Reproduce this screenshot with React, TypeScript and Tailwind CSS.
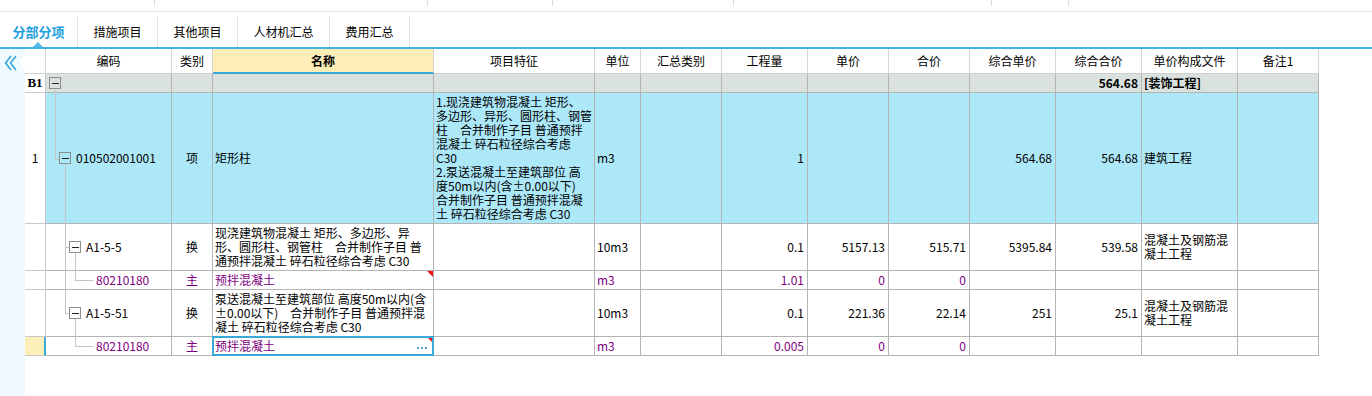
import React from 'react';
import clsx from 'clsx';

// column widths, border included
const W = {
  no: 'w-[21px]',
  code: 'w-[126px]',
  type: 'w-[41px]',
  name: 'w-[221px]',
  feat: 'w-[161px]',
  unit: 'w-[46px]',
  sum: 'w-[81px]',
  qty: 'w-[86px]',
  price: 'w-[81px]',
  total: 'w-[81px]',
  cprice: 'w-[86px]',
  ctotal: 'w-[86px]',
  file: 'w-[96px]',
  note: 'w-[81px]',
};

const HEADERS: [string, string][] = [
  [W.no, ''],
  [W.code, '编码'],
  [W.type, '类别'],
  [W.name, '名称'],
  [W.feat, '项目特征'],
  [W.unit, '单位'],
  [W.sum, '汇总类别'],
  [W.qty, '工程量'],
  [W.price, '单价'],
  [W.total, '合价'],
  [W.cprice, '综合单价'],
  [W.ctotal, '综合合价'],
  [W.file, '单价构成文件'],
  [W.note, '备注1'],
];

const TABS = [
  { label: '分部分项', w: 'w-[78px]', active: true },
  { label: '措施项目', w: 'w-[80px]' },
  { label: '其他项目', w: 'w-[80px]' },
  { label: '人材机汇总', w: 'w-[92px]' },
  { label: '费用汇总', w: 'w-[80px]' },
];

function Cell({ w, className, children }: { w: string; className?: string; children?: React.ReactNode }) {
  return (
    <div className={clsx('relative flex shrink-0 items-center border-r border-b border-[#b4b4b4]', w, className)}>
      {children}
    </div>
  );
}

function Lines({ lines }: { lines: string[] }) {
  return (
    <div className="flex flex-col leading-[14px]">
      {lines.map((l, i) => (
        <div key={i} className="whitespace-pre">
          {l}
        </div>
      ))}
    </div>
  );
}

function Toggle() {
  return (
    <div className="flex h-[12px] w-[12px] shrink-0 items-center justify-center border border-[#8e8e8e]">
      <div className="h-px w-[7px] bg-[#222]" />
    </div>
  );
}

// tree connector segment
function Seg({ className }: { className: string }) {
  return <div className={clsx('absolute bg-[#c4c4c4]', className)} />;
}

interface RowData {
  h: string;
  bg?: string;
  no?: string;
  code: React.ReactNode;
  type: string;
  name: React.ReactNode;
  feat?: string[];
  unit: string;
  qty: string;
  price?: string;
  total?: string;
  cprice?: string;
  ctotal?: string;
  file?: string[];
  purple?: boolean;
  flag?: boolean;
  selected?: boolean;
}

function DataRow({ r }: { r: RowData }) {
  const num = 'justify-end pr-[3px]';
  return (
    <div className={clsx('flex', r.h, r.purple ? 'text-[#800080]' : 'text-black')}>
      <Cell
        w={W.no}
        className={clsx(
          'justify-center border-[#c8c8c8] text-black',
          r.selected ? 'border-r-2 border-r-[#3aa8d8] bg-[#fdefb9]' : 'bg-white'
        )}
      >
        {r.no}
      </Cell>
      <Cell w={W.code} className={r.bg}>
        {r.code}
      </Cell>
      <Cell w={W.type} className={clsx('justify-center', r.bg)}>
        {r.type}
      </Cell>
      <Cell w={W.name} className={clsx('pl-[2px] pr-[6px]', r.bg)}>
        {r.name}
        {r.selected && (
          <div className="ml-auto mt-[3px] flex gap-[2px]">
            <div className="h-[2px] w-[2px] bg-[#4a9fd8]" />
            <div className="h-[2px] w-[2px] bg-[#4a9fd8]" />
            <div className="h-[2px] w-[2px] bg-[#4a9fd8]" />
          </div>
        )}
        {r.flag && (
          <div className="absolute top-0 right-0 h-0 w-0 border-t-[6px] border-l-[6px] border-t-[#ff1010] border-l-transparent" />
        )}
        {r.selected && <div className="absolute -top-px -right-px -bottom-px -left-px z-10 border-2 border-[#3aa8d8]" />}
      </Cell>
      <Cell w={W.feat} className={clsx('pl-[2px]', r.bg)}>
        {r.feat && <Lines lines={r.feat} />}
      </Cell>
      <Cell w={W.unit} className={clsx('pl-[2px]', r.bg)}>
        {r.unit}
      </Cell>
      <Cell w={W.sum} className={r.bg} />
      <Cell w={W.qty} className={clsx(num, r.bg)}>
        {r.qty}
      </Cell>
      <Cell w={W.price} className={clsx(num, r.bg)}>
        {r.price}
      </Cell>
      <Cell w={W.total} className={clsx(num, r.bg)}>
        {r.total}
      </Cell>
      <Cell w={W.cprice} className={clsx(num, r.bg)}>
        {r.cprice}
      </Cell>
      <Cell w={W.ctotal} className={clsx(num, r.bg)}>
        {r.ctotal}
      </Cell>
      <Cell w={W.file} className={clsx('pl-[2px]', r.bg)}>
        {r.file && <Lines lines={r.file} />}
      </Cell>
      <Cell w={W.note} className={r.bg} />
    </div>
  );
}

const ROWS: RowData[] = [
  {
    h: 'h-[131px]',
    bg: 'bg-[#ade8f9]',
    no: '1',
    code: (
      <>
        <Seg className="top-0 left-[9px] h-[66px] w-px" />
        <Seg className="top-[66px] left-[9px] h-px w-[4px]" />
        <Seg className="top-[71px] -bottom-px left-[19px] w-px" />
        <div className="ml-[13px] flex items-center">
          <Toggle />
          <span className="ml-[5px]">010502001001</span>
        </div>
      </>
    ),
    type: '项',
    name: '矩形柱',
    feat: [
      '1.现浇建筑物混凝土 矩形、',
      '多边形、异形、圆形柱、钢管',
      '柱\u3000合并制作子目 普通预拌',
      '混凝土 碎石粒径综合考虑',
      'C30',
      '2.泵送混凝土至建筑部位 高',
      '度50m以内(含±0.00以下)',
      '合并制作子目 普通预拌混凝',
      '土 碎石粒径综合考虑 C30',
    ],
    unit: 'm3',
    qty: '1',
    cprice: '564.68',
    ctotal: '564.68',
    file: ['建筑工程'],
  },
  {
    h: 'h-[47px]',
    bg: 'bg-white',
    code: (
      <>
        <Seg className="top-0 -bottom-px left-[19px] w-px" />
        <Seg className="top-[23px] left-[19px] h-px w-[4px]" />
        <Seg className="top-[29px] -bottom-px left-[29px] w-px" />
        <div className="ml-[23px] flex items-center">
          <Toggle />
          <span className="ml-[5px]">A1-5-5</span>
        </div>
      </>
    ),
    type: '换',
    name: (
      <Lines
        lines={[
          '现浇建筑物混凝土 矩形、多边形、异',
          '形、圆形柱、钢管柱\u3000合并制作子目 普',
          '通预拌混凝土 碎石粒径综合考虑 C30',
        ]}
      />
    ),
    unit: '10m3',
    qty: '0.1',
    price: '5157.13',
    total: '515.71',
    cprice: '5395.84',
    ctotal: '539.58',
    file: ['混凝土及钢筋混', '凝土工程'],
  },
  {
    h: 'h-[19px]',
    bg: 'bg-white',
    purple: true,
    flag: true,
    code: (
      <>
        <Seg className="top-0 -bottom-px left-[19px] w-px" />
        <Seg className="top-0 left-[29px] h-[9px] w-px" />
        <Seg className="top-[9px] left-[29px] h-px w-[18px]" />
        <span className="ml-[50px]">80210180</span>
      </>
    ),
    type: '主',
    name: '预拌混凝土',
    unit: 'm3',
    qty: '1.01',
    price: '0',
    total: '0',
  },
  {
    h: 'h-[47px]',
    bg: 'bg-white',
    code: (
      <>
        <Seg className="top-0 left-[19px] h-[23px] w-px" />
        <Seg className="top-[23px] left-[19px] h-px w-[4px]" />
        <Seg className="top-[29px] -bottom-px left-[29px] w-px" />
        <div className="ml-[23px] flex items-center">
          <Toggle />
          <span className="ml-[5px]">A1-5-51</span>
        </div>
      </>
    ),
    type: '换',
    name: (
      <Lines
        lines={[
          '泵送混凝土至建筑部位 高度50m以内(含',
          '±0.00以下)\u3000合并制作子目 普通预拌混',
          '凝土 碎石粒径综合考虑 C30',
        ]}
      />
    ),
    unit: '10m3',
    qty: '0.1',
    price: '221.36',
    total: '22.14',
    cprice: '251',
    ctotal: '25.1',
    file: ['混凝土及钢筋混', '凝土工程'],
  },
  {
    h: 'h-[19px]',
    bg: 'bg-white',
    purple: true,
    flag: true,
    selected: true,
    code: (
      <>
        <Seg className="top-0 left-[29px] h-[9px] w-px" />
        <Seg className="top-[9px] left-[29px] h-px w-[18px]" />
        <span className="ml-[50px]">80210180</span>
      </>
    ),
    type: '主',
    name: '预拌混凝土',
    unit: 'm3',
    qty: '0.005',
    price: '0',
    total: '0',
  },
];

export default function App() {
  return (
    <div className="h-[396px] w-[1372px] overflow-hidden bg-white font-['Noto_Sans_CJK_SC','Liberation_Sans',sans-serif] text-[12px] text-black">
      {/* cut-off toolbar strip */}
      <div className="flex h-[12px] border-b border-[#e3e3e3]">
        {['w-[155px]', 'w-[273px]', 'w-[125px]', 'w-[181px]', 'w-[258px]', 'w-[77px]'].map((w) => (
          <div key={w} className={clsx('h-[6px] border-r border-[#dedede]', w)} />
        ))}
      </div>

      {/* tabs */}
      <div className="flex h-[35px] items-end">
        {TABS.map((t) => (
          <div
            key={t.label}
            className={clsx(
              'relative flex h-[31px] items-center justify-center border-r border-[#e0e0e0]',
              t.w,
              t.active ? 'text-[13px] font-bold text-[#1d9ee0]' : 'text-[12px]'
            )}
          >
            {t.label}
            {t.active && (
              <div className="absolute bottom-0 left-[33px] h-0 w-0 border-r-[5px] border-b-[5px] border-l-[5px] border-r-transparent border-b-[#55b8e8] border-l-transparent" />
            )}
          </div>
        ))}
      </div>
      <div className="h-[2px] bg-[#45b2e4]" />

      <div className="flex">
        {/* collapse bar */}
        <div className="relative h-[347px] w-[25px] shrink-0 bg-[#eefafd]">
          <svg className="absolute top-[6px] left-[4px]" width="14" height="16" viewBox="0 0 14 16">
            <path d="M7 1 L1.5 8 L7 15 M12 1 L6.5 8 L12 15" fill="none" stroke="#2f9fd8" strokeWidth="1.4" />
          </svg>
          <svg className="absolute top-[4px] left-[19px]" width="6" height="18" viewBox="0 0 6 18">
            <polygon points="6,0 0,9 6,18" fill="#ffffff" />
          </svg>
        </div>

        <div className="flex flex-col">
          {/* header */}
          <div className="flex h-[25px]">
            {HEADERS.map(([w, label], i) => (
              <div
                key={i}
                className={clsx(
                  'flex shrink-0 items-center justify-center border-r border-[#d6d6d6]',
                  w,
                  label === '名称'
                    ? 'border-b-2 border-b-[#3aa8d8] bg-[#fdeeb8] font-bold'
                    : 'border-b border-b-[#cfcfcf] bg-white'
                )}
              >
                {label}
              </div>
            ))}
          </div>

          {/* B1 section row */}
          <div className="flex h-[19px] font-bold">
            <Cell w={W.no} className="justify-center border-[#c8c8c8] bg-white font-['Liberation_Serif',serif] text-[13px]">
              B1
            </Cell>
            <Cell w={W.code} className="bg-[#d9e2de]">
              <Seg className="top-[16px] -bottom-px left-[9px] w-px" />
              <div className="ml-[3px]">
                <Toggle />
              </div>
            </Cell>
            <Cell w={W.type} className="bg-[#d9e2de]" />
            <Cell w={W.name} className="bg-[#d9e2de]" />
            <Cell w={W.feat} className="bg-[#d9e2de]" />
            <Cell w={W.unit} className="bg-[#d9e2de]" />
            <Cell w={W.sum} className="bg-[#d9e2de]" />
            <Cell w={W.qty} className="bg-[#d9e2de]" />
            <Cell w={W.price} className="bg-[#d9e2de]" />
            <Cell w={W.total} className="bg-[#d9e2de]" />
            <Cell w={W.cprice} className="bg-[#d9e2de]" />
            <Cell w={W.ctotal} className="justify-end bg-[#d9e2de] pr-[3px]">
              564.68
            </Cell>
            <Cell w={W.file} className="bg-[#d9e2de] pl-[2px]">
              [装饰工程]
            </Cell>
            <Cell w={W.note} className="bg-[#d9e2de]" />
          </div>

          {ROWS.map((r, i) => (
            <DataRow key={i} r={r} />
          ))}
        </div>
      </div>
    </div>
  );
}
